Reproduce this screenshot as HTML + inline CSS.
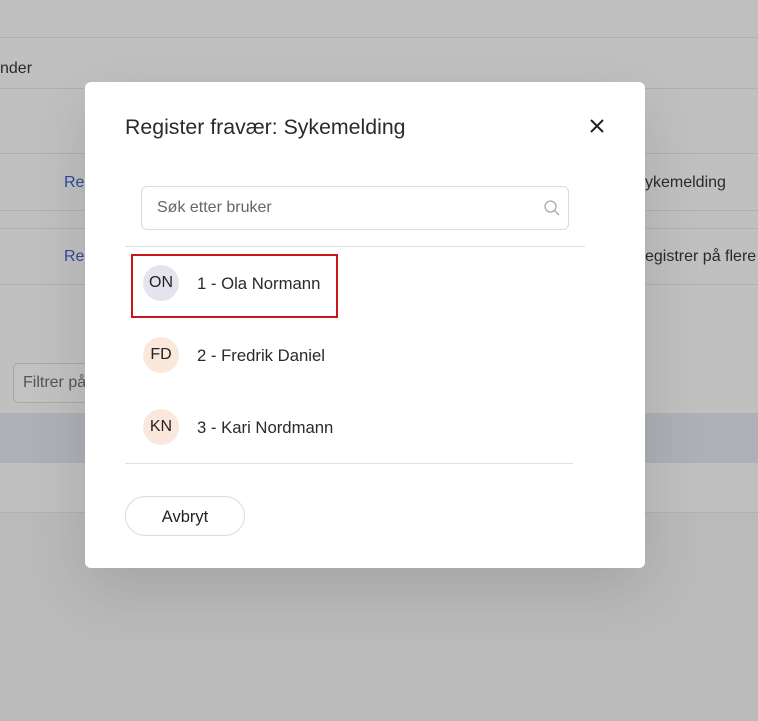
<!DOCTYPE html>
<html><head><style>
*{margin:0;padding:0;box-sizing:border-box}
body{width:758px;height:721px;overflow:hidden;background:#bcbcbc;font-family:"Liberation Sans",sans-serif;position:relative;color:#222}
.a{position:absolute}
.line{position:absolute;left:0;width:758px;height:1px;background:#a9b1ba}
.t{position:absolute;font-size:16px;color:#2a2a2a}
.m{position:absolute;left:85px;top:82px;width:560px;height:486px;background:#fff;border-radius:6px;box-shadow:0 20px 60px rgba(0,0,0,.12)}
.av{position:absolute;width:36px;height:36px;border-radius:50%;font-size:16px;line-height:36px;text-align:center;color:#222}
.nm{position:absolute;font-size:16.7px;color:#2a2a2a}
</style></head><body>
<div class="a" style="left:0;top:0;width:758px;height:37px;background:#bfbfbf"></div>
<div class="a" style="left:0;top:37px;width:758px;height:476px;background:#c0c0c0"></div>
<div class="a" style="left:0;top:413px;width:758px;height:50px;background:#adb0b5"></div>
<div class="line" style="top:37px"></div>
<div class="line" style="top:88px"></div>
<div class="line" style="top:153px"></div>
<div class="line" style="top:210px"></div>
<div class="line" style="top:228px"></div>
<div class="line" style="top:284px"></div>
<div class="line" style="top:413px"></div>
<div class="line" style="top:462px"></div>
<div class="line" style="top:512px"></div>
<div class="a" style="left:0;top:513px;width:758px;height:208px;background:#bababa"></div>
<div class="t" style="left:0;top:60px">nder</div>
<div class="t" style="left:64px;top:174px;color:#2f4a9a">Reg</div>
<div class="t" style="left:64px;top:248px;color:#2f4a9a">Reg</div>
<div class="t" style="left:645px;top:174px">ykemelding</div>
<div class="t" style="left:645px;top:248px">egistrer på flere</div>
<div class="a" style="left:13px;top:363px;width:90px;height:40px;border:1px solid #a8a8a8;border-radius:5px;background:#c2c2c2"></div>
<div class="t" style="left:23px;top:374px;color:#555">Filtrer på</div>
<div class="m">
<div class="a" style="left:40px;top:33px;font-size:21.3px;color:#2a2a2a">Register fravær: Sykemelding</div>
<svg class="a" style="left:503px;top:35px" width="18" height="18" viewBox="0 0 18 18"><path d="M3 3L15 15M15 3L3 15" stroke="#222" stroke-width="2"/></svg>
<div class="a" style="left:56px;top:104px;width:428px;height:44px;border:1px solid #d6dde3;border-radius:6px"></div>
<div class="a" style="left:72px;top:117px;font-size:16px;color:#666">Søk etter bruker</div>
<svg class="a" style="left:458px;top:117px" width="18" height="18" viewBox="0 0 18 18"><circle cx="7.5" cy="7.5" r="5.5" stroke="#aaa" stroke-width="1.3" fill="none"/><path d="M11.5 11.5L16 16" stroke="#aaa" stroke-width="1.3"/></svg>
<div class="a" style="left:40px;top:164px;width:460px;height:1px;background:#dbe1e6"></div>
<div class="a" style="left:46px;top:172px;width:207px;height:64px;border:2px solid #c9161c"></div>
<div class="av" style="left:58px;top:183px;background:#e6e3ee">ON</div>
<div class="nm" style="left:112px;top:192px">1 - Ola Normann</div>
<div class="av" style="left:58px;top:255px;background:#fbe8dc">FD</div>
<div class="nm" style="left:112px;top:264px">2 - Fredrik Daniel</div>
<div class="av" style="left:58px;top:327px;background:#fbe8dc">KN</div>
<div class="nm" style="left:112px;top:336px">3 - Kari Nordmann</div>
<div class="a" style="left:40px;top:381px;width:448px;height:1px;background:#dbe1e6"></div>
<div class="a" style="left:40px;top:414px;width:120px;height:40px;border:1px solid #d8dde2;border-radius:20px;text-align:center;line-height:40px;font-size:16.5px;color:#222">Avbryt</div>
</div>
</body></html>
